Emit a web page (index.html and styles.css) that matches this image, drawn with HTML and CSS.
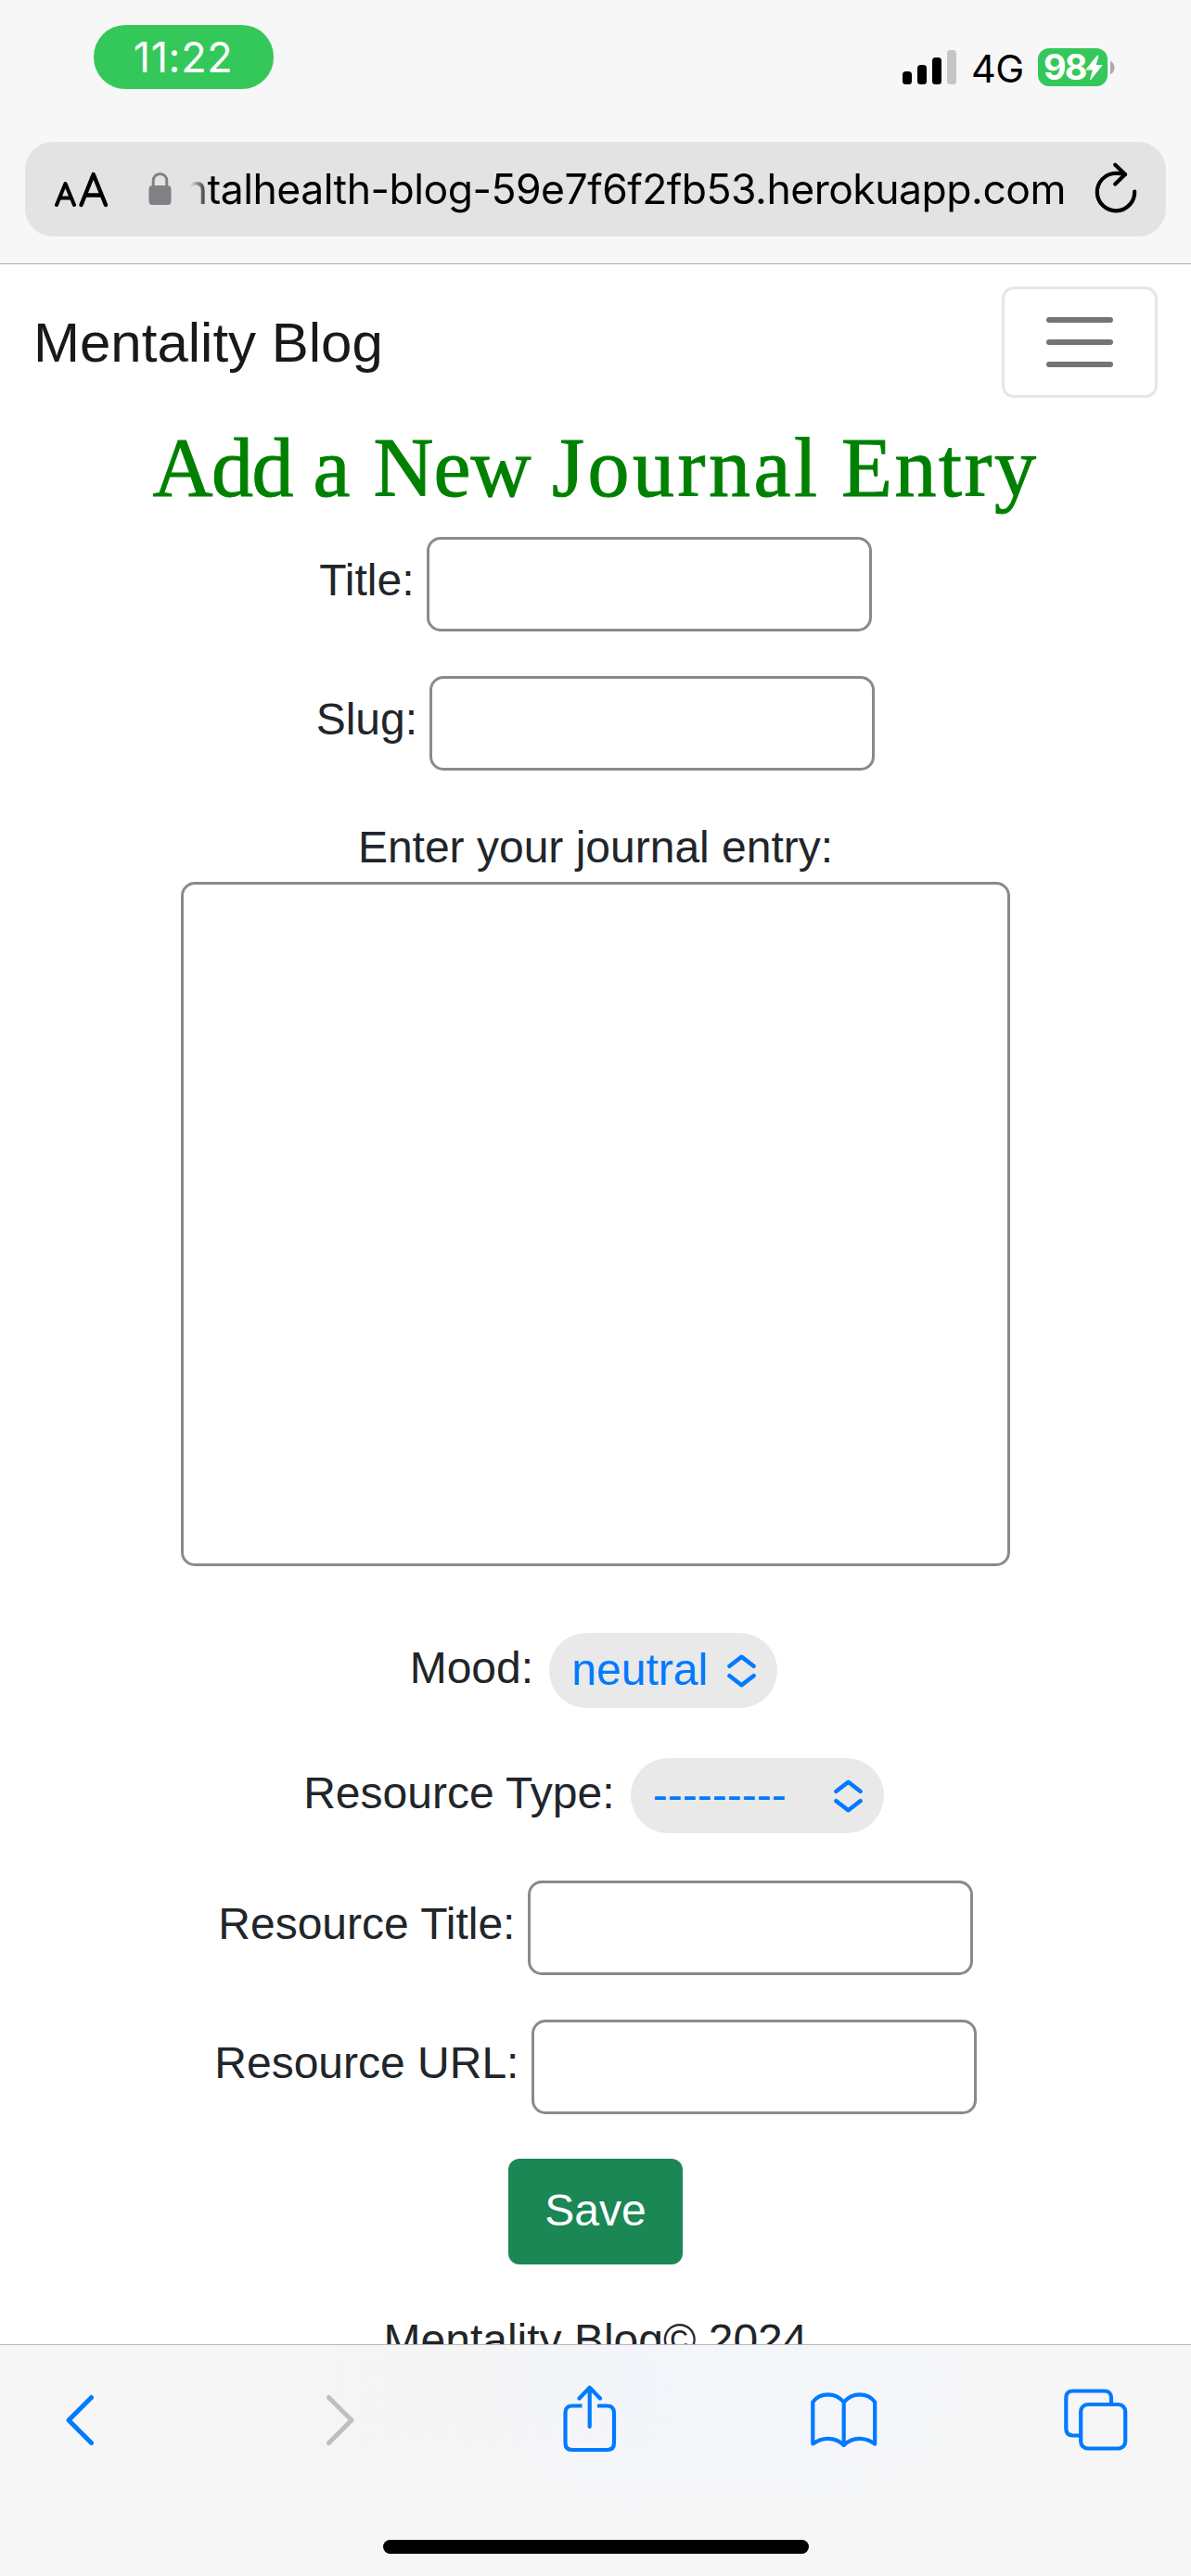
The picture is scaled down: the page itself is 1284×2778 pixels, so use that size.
FILE: index.html
```html
<!DOCTYPE html>
<html lang="en">
<head>
<meta charset="utf-8">
<title>Mentality Blog</title>
<link rel="stylesheet" href="styles.css">
</head>
<body>
<div class="screen">
  <header class="chrome">
    <div class="status">
      <div class="clock">11:22</div>
      <div class="status-right">
        <svg class="signal" width="58" height="37" viewBox="0 0 58 37">
          <rect x="0" y="23" width="10" height="14" rx="3.5"/>
          <rect x="16" y="16" width="10" height="21" rx="3.5"/>
          <rect x="32" y="8" width="10" height="29" rx="3.5"/>
          <rect x="48" y="0" width="10" height="37" rx="3.5" fill="#c5c5c5"/>
        </svg>
        <span class="network">4G</span>
        <div class="battery">
          <span class="level">98</span>
          <svg class="bolt" width="19" height="28" viewBox="0 0 19 28"><path d="M13 1 L1 16 H8.500 L5.500 27 L18 11.500 H11 L14 1.500 Z" fill="#fff" stroke="#fff" stroke-linejoin="round"/></svg>
        </div>
        <svg class="nub" width="5" height="14" viewBox="0 0 5 14"><path d="M0 0 C3 1 4.5 4 4.5 7 C4.5 10 3 13 0 14 Z" fill="#aaa"/></svg>
      </div>
    </div>
    <div class="address">
      <svg class="text-size" width="58" height="40" viewBox="0 0 58 40" fill="none" stroke="#000" stroke-linecap="round" stroke-linejoin="round">
        <path stroke-width="4" d="M2 36 L11.5 13 L21 36 M5.5 28.5 H17.5"/>
        <path stroke-width="4.4" d="M28.5 36 L41.7 3 L55 36 M33 25.5 H50.5"/>
      </svg>
      <svg class="lock" width="25" height="35" viewBox="0 0 25 35">
        <rect x="0.5" y="14" width="24" height="21" rx="4" fill="#808085"/>
        <path d="M5.2 15 V9.500 C5.200 4.500 8.500 1.600 12.500 1.600 C16.500 1.600 19.800 4.500 19.800 9.500 V15" fill="none" stroke="#808085" stroke-width="3"/>
      </svg>
      <div class="url"><span>mentalhealth-blog-59e7f6f2fb53.herokuapp.com</span></div>
      <svg class="reload" width="46" height="56" viewBox="0 0 46 56" fill="none" stroke="#000" stroke-width="4.2" stroke-linecap="round" stroke-linejoin="round">
        <path d="M43.200 31.500 A20.200 20.200 0 1 1 23 11.900 Q28 11.800 33 13"/>
        <path d="M22.300 2.800 L33 13 L22.300 23.500"/>
      </svg>
    </div>
  </header>

  <main class="page">
    <nav class="navbar">
      <a class="brand">Mentality Blog</a>
      <button class="toggler" aria-label="Toggle navigation"><i></i><i></i><i></i></button>
    </nav>
    <h1 class="heading"><span class="tight">Add</span> a <span class="snug">New</span> <span class="loose">Journal</span> Entry</h1>
    <form class="form">
      <div class="row title-row"><label>Title:</label><input class="field" type="text"></div>
      <div class="row slug-row"><label>Slug:</label><input class="field" type="text"></div>
      <label class="entry-label">Enter your journal entry:</label>
      <textarea class="entry"></textarea>
      <div class="row mood-row"><label>Mood:</label>
        <div class="select mood"><span>neutral</span>
          <svg width="32" height="36" viewBox="0 0 32 36"><path d="M3.500 12.800 L16.500 2.800 L29.500 12.800 M3.500 23.200 L16.500 33.200 L29.500 23.200"/></svg></div>
      </div>
      <div class="row type-row"><label>Resource Type:</label>
        <div class="select type"><span>---------</span>
          <svg width="32" height="36" viewBox="0 0 32 36"><path d="M3.500 12.800 L16.500 2.800 L29.500 12.800 M3.500 23.200 L16.500 33.200 L29.500 23.200"/></svg></div>
      </div>
      <div class="row resource-title-row"><label>Resource Title:</label><input class="field" type="text"></div>
      <div class="row resource-url-row"><label>Resource URL:</label><input class="field" type="text"></div>
      <button class="save" type="button">Save</button>
    </form>
    <footer class="footer">Mentality Blog© 2024</footer>
  </main>

  <div class="toolbar">
    <div class="tools">
      <svg class="back" width="32" height="56" viewBox="0 0 32 56" stroke-width="5"><path d="M28.500 3.500 L4 28 L28.500 52.500"/></svg>
      <svg class="forward" width="32" height="56" viewBox="0 0 32 56" stroke-width="5"><path d="M3.500 3.500 L28 28 L3.500 52.500"/></svg>
      <svg class="share" width="58" height="74" viewBox="0 0 58 74" stroke-width="4.200">
        <path stroke-linecap="butt" d="M20.500 22.500 H10 Q2.500 22.500 2.500 30 V62.500 Q2.500 70 10 70 H47.500 Q55 70 55 62.500 V30 Q55 22.500 47.500 22.500 H37"/>
        <path d="M28.700 45 V3 M17.500 14.500 L28.700 2.800 L40 14.500"/>
      </svg>
      <svg class="book" width="72" height="60" viewBox="0 0 72 60" stroke-width="4.200">
        <path d="M35.700 10.500 C31 5 25 2.300 18.900 2.300 C12 2.300 6 5 2.300 10.500 V55.500 C7 52 13 49.800 18.900 49.800 C25 49.800 31 52 35.700 57 C40.500 52 46.500 49.800 52.500 49.800 C58.500 49.800 64.500 52 69.200 55.500 V10.500 C65.500 5 59.500 2.300 52.500 2.300 C46.500 2.300 40.500 5 35.700 10.500 V56"/>
      </svg>
      <svg class="tabs" width="70" height="68" viewBox="0 0 70 68" stroke-width="4.200">
        <path stroke-linecap="butt" d="M51 15 V10 Q51 2.500 43.500 2.500 H9.500 Q2.300 2.500 2.300 10 V43 Q2.300 50.500 9.500 50.500 H17"/>
        <rect x="18.200" y="17" width="48" height="47.500" rx="7.500"/>
      </svg>
    </div>
    <div class="home-indicator"></div>
  </div>
</div>
</body>
</html>
```
FILE: styles.css
```css
* { box-sizing: border-box; }
body { margin: 0; background: #fff; font-family: "Liberation Sans", Arial, sans-serif; }
svg { display: block; flex: none; }
.screen { width: 1284px; height: 2778px; overflow: hidden; display: flex; flex-direction: column; }

/* Browser chrome */
.chrome { height: 285px; background: #f7f7f7; border-bottom: 1px solid #acacac; font-family: Inter, sans-serif; }
.status { height: 153px; padding: 27px 82px 0 101px; display: flex; justify-content: space-between; align-items: flex-start; }
.clock { width: 194px; height: 69px; border-radius: 34px; background: #34c85a; color: #fff; font-size: 45px; letter-spacing: 0.6px; line-height: 70px; text-align: center; padding-right: 1px; }
.status-right { display: flex; align-items: center; padding-top: 25px; height: 66px; }
.network { margin-left: 16px; width: 59px; font-size: 41.500px; line-height: 50px; padding-top: 3px; letter-spacing: -0.500px; }
.battery { margin-left: 13px; width: 75px; height: 41px; border-radius: 12px; background: #34c85a; display: flex; align-items: center; padding-left: 6px; }
.level { width: 45px; color: #fff; font-weight: 700; font-size: 38px; line-height: 41px; letter-spacing: -2px; }
.nub { margin-left: 3px; }
.address { margin: 0 27px; height: 102px; border-radius: 30px; background: #e3e3e3; display: flex; align-items: center; padding-left: 32px; }
.text-size { margin-top: 1px; }
.lock { margin-left: 43px; margin-right: 1px; margin-top: -2px; }
.url { margin-left: 19px; width: 944px; height: 80px; overflow: hidden; display: flex; justify-content: flex-end; line-height: 80px; font-size: 44.500px; letter-spacing: -0.500px; white-space: nowrap; mask-image: linear-gradient(90deg, transparent 0, #000 22px); }
.reload { margin-left: 31px; margin-top: -2px; }

/* Site */
.page { height: 2243px; overflow: hidden; color: #212529; font-size: 48px; }
.navbar { height: 168px; padding: 24px 36px; display: flex; justify-content: space-between; align-items: center; }
.brand { font-size: 60px; line-height: 90px; color: #191919; padding-top: 1px; }
.toggler { width: 168px; height: 120px; border: 3px solid #e6e6e6; border-radius: 13px; background: #fff; padding: 0; display: flex; flex-direction: column; align-items: center; justify-content: center; gap: 18px; }
.toggler i { width: 72px; height: 6px; border-radius: 3px; background: #747474; }
.heading { margin: 0 0 24px; height: 102px; line-height: 104px; font-family: "Liberation Serif", Georgia, serif; font-weight: 400; font-size: 90px; color: #008000; text-align: center; white-space: nowrap; letter-spacing: 2.500px; word-spacing: -2.500px; -webkit-text-stroke: 1px #008000; }
.heading .tight { letter-spacing: -1.500px; }
.heading .snug { letter-spacing: 0; }
.heading .loose { letter-spacing: 3.500px; }
.form { display: flex; flex-direction: column; align-items: center; }
.row { display: flex; align-items: center; gap: 13.300px; }
.row label { line-height: 72px; padding-bottom: 8px; white-space: nowrap; }
.field, .entry { border: 3px solid #8a8a8e; border-radius: 15px; background: #fff; margin: 0; padding: 0; outline: 0; }
.field { width: 480px; height: 102px; }
.slug-row { margin-top: 48px; }
.entry-label { margin-top: 46px; line-height: 74px; }
.entry { width: 894px; height: 738px; resize: none; }
.mood-row { margin-top: 72px; }
.type-row { margin-top: 54px; }
.mood-row label, .type-row label { padding-bottom: 6px; margin: 0 -2px 0 2px; }
.select { height: 81px; border-radius: 41px; margin: 0 6px; background: #e9e9e9; color: #007aff; padding: 0 23px 0 24px; display: flex; align-items: center; justify-content: space-between; }
.select span { padding-bottom: 3px; }
.select svg { fill: none; stroke: #007aff; stroke-width: 4.600; stroke-linecap: round; stroke-linejoin: round; }
.mood { width: 246px; }
.type { width: 273px; }
.resource-title-row { margin-top: 51px; }
.resource-url-row { margin-top: 48px; }
.save { margin-top: 48px; width: 188px; height: 114px; border: 0; border-radius: 12px; background: #1a8754; color: #fff; font: 48px/112px "Liberation Sans", Arial, sans-serif; padding: 0 0 2px; }
.footer { margin-top: 46px; line-height: 72px; text-align: center; }

/* Bottom toolbar */
.toolbar { height: 250px; border-top: 1px solid #b8b8bb; background: linear-gradient(180deg, rgba(246,246,246,0) 30%, #f6f6f6 85%), linear-gradient(90deg, #f6f6f6 0, #f5f5f5 38%, #f3f5fa 52%, #f4f6fa 70%, #f6f6f6 85%); display: flex; flex-direction: column; align-items: center; }
.tools { width: 100%; height: 160px; margin-bottom: 50px; padding: 2px 0 0 70px; display: flex; align-items: center; }
.tools svg { fill: none; stroke: #007aff; stroke-linecap: round; stroke-linejoin: round; }
.tools .forward { stroke: #bfbfbf; margin-left: 249px; }
.tools .share { margin-left: 224px; margin-top: -3px; }
.tools .book { margin-left: 209px; }
.tools .tabs { margin-left: 201px; }
.home-indicator { width: 459px; height: 15px; border-radius: 8px; background: #000; }
```
